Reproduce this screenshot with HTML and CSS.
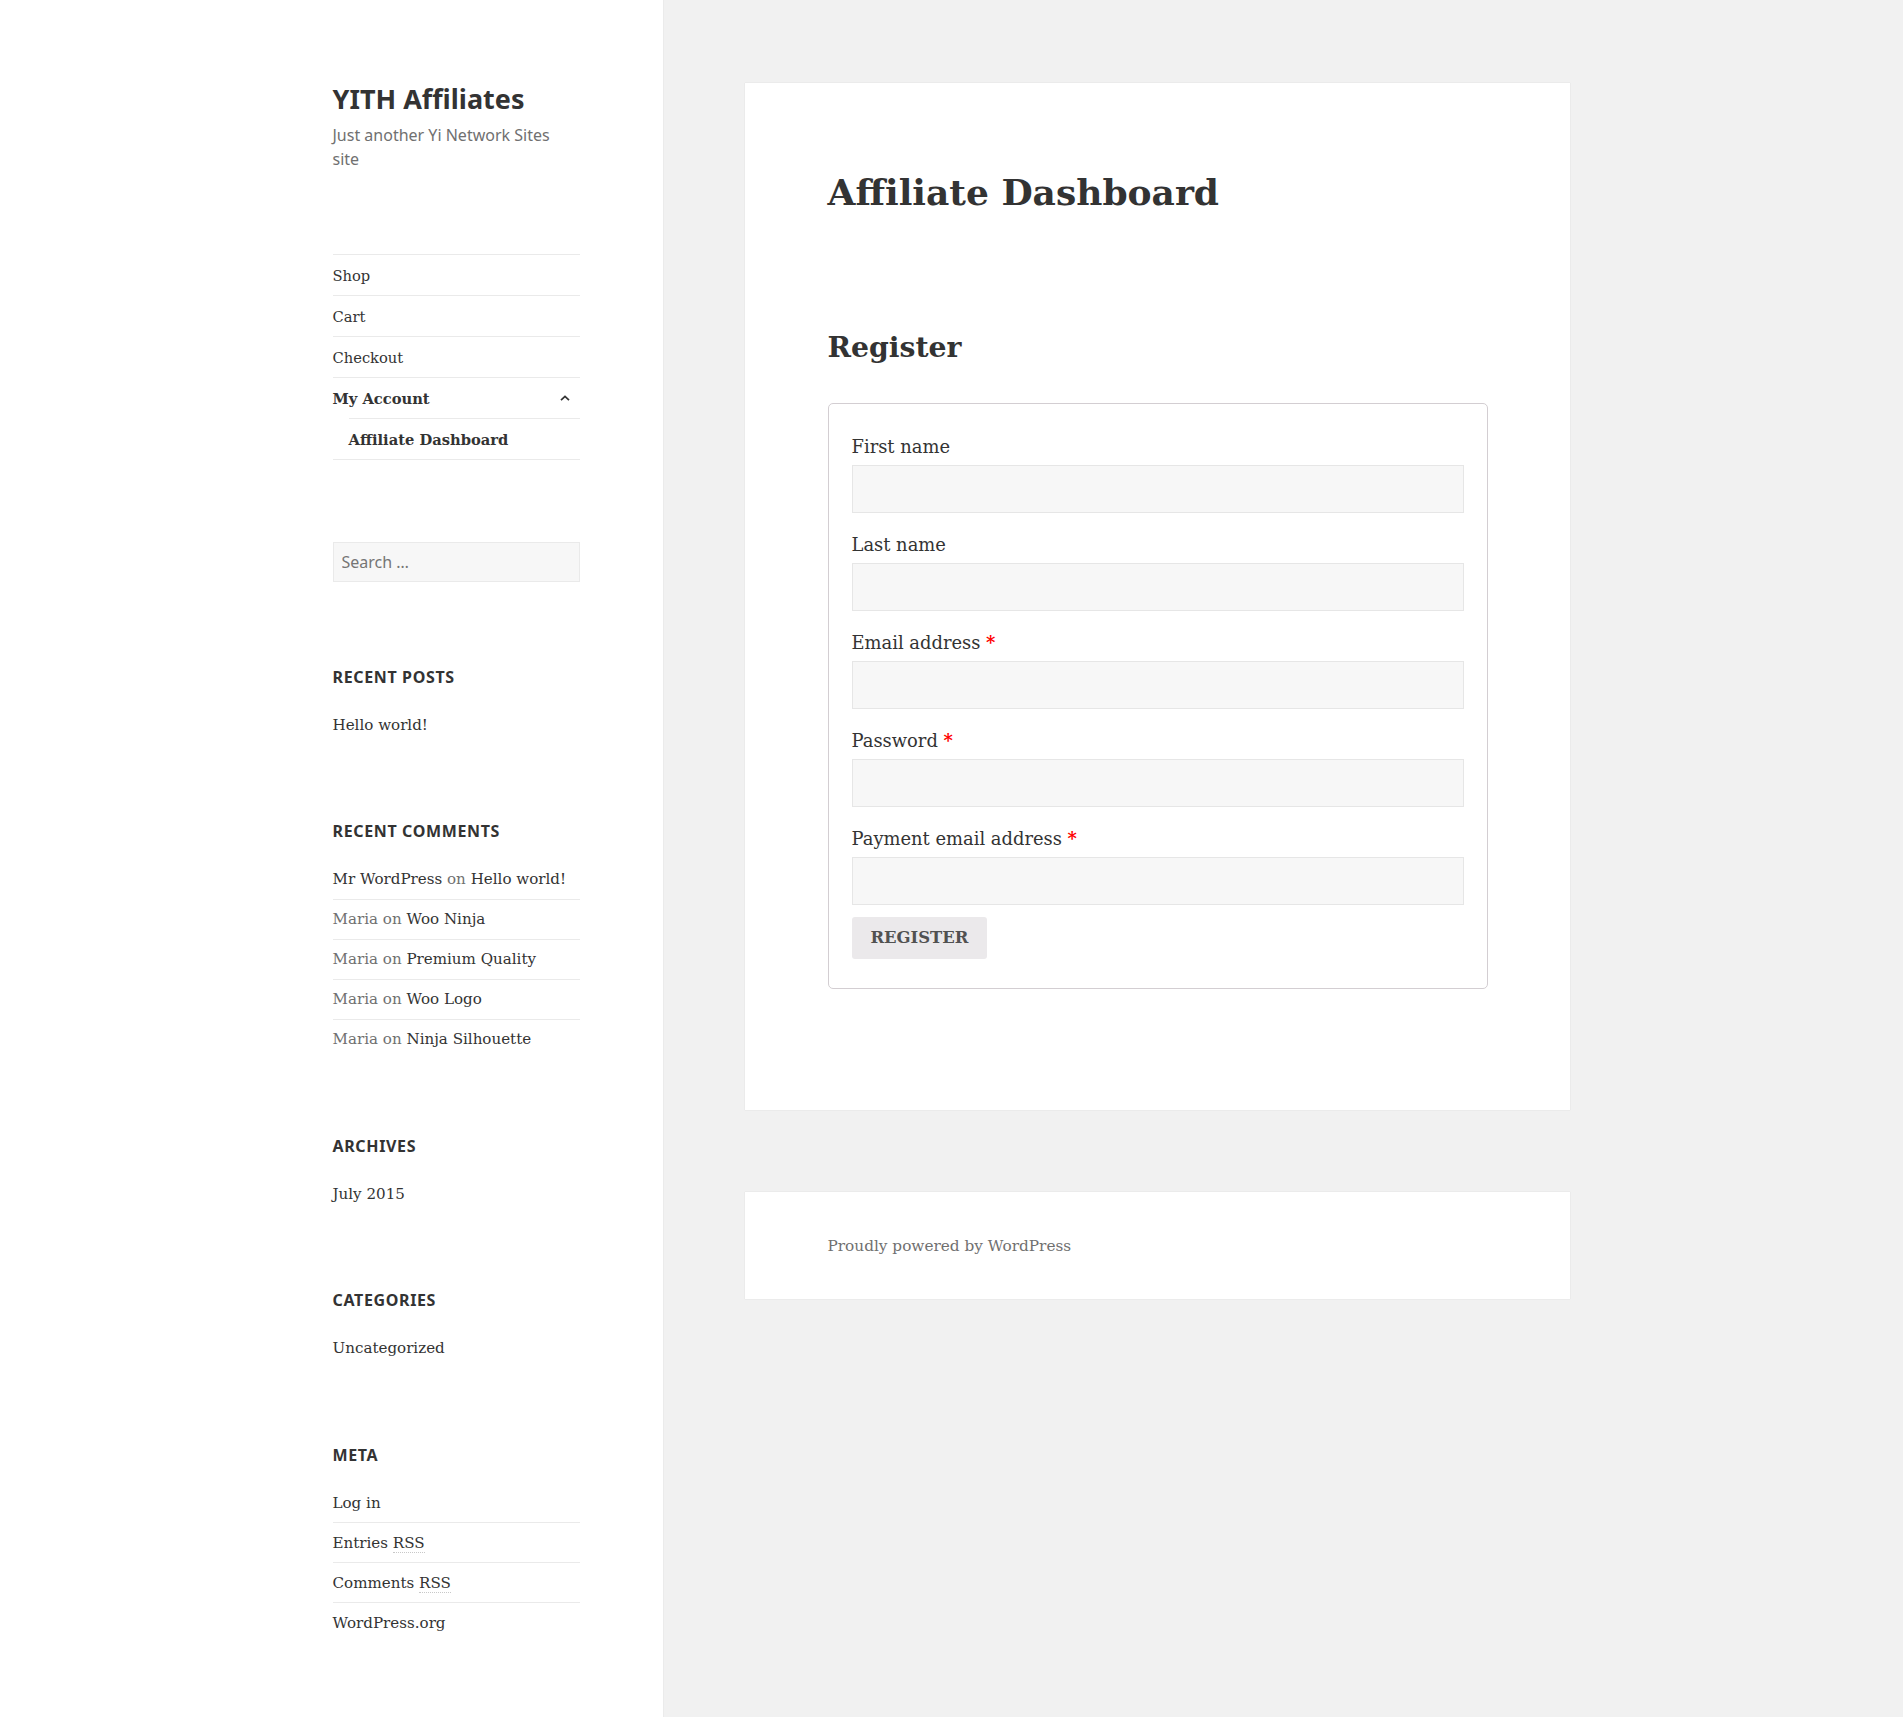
FILE: index.html
```html
<!DOCTYPE html>
<html lang="en">
<head>
<meta charset="utf-8">
<title>Affiliate Dashboard – YITH Affiliates</title>
<link rel="stylesheet" href="styles.css">
</head>
<body>
<div class="page">
  <aside class="sidebar">
    <header class="site-header">
      <p class="site-title"><a href="#">YITH Affiliates</a></p>
      <p class="site-description">Just another Yi Network Sites site</p>
    </header>
    <nav class="main-nav">
      <ul class="menu">
        <li><a href="#">Shop</a></li>
        <li><a href="#">Cart</a></li>
        <li><a href="#">Checkout</a></li>
        <li class="ancestor">
          <div class="menu-row">
            <a href="#">My Account</a>
            <span class="toggle"><svg width="10" height="6" viewBox="0 0 10 6"><polyline points="1,5.2 5,1.4 9,5.2" fill="none" stroke="#333" stroke-width="1.7"/></svg></span>
          </div>
          <ul class="sub-menu">
            <li class="current"><a href="#">Affiliate Dashboard</a></li>
          </ul>
        </li>
      </ul>
    </nav>
    <div class="widgets">
      <section class="widget widget-search">
        <input class="search-field" type="search" placeholder="Search …">
      </section>
      <section class="widget">
        <h2 class="widget-title">Recent Posts</h2>
        <ul class="widget-list">
          <li><a href="#">Hello world!</a></li>
        </ul>
      </section>
      <section class="widget">
        <h2 class="widget-title">Recent Comments</h2>
        <ul class="widget-list">
          <li><a href="#">Mr WordPress</a> <span class="muted">on</span> <a href="#">Hello world!</a></li>
          <li><span class="muted">Maria on</span> <a href="#">Woo Ninja</a></li>
          <li><span class="muted">Maria on</span> <a href="#">Premium Quality</a></li>
          <li><span class="muted">Maria on</span> <a href="#">Woo Logo</a></li>
          <li><span class="muted">Maria on</span> <a href="#">Ninja Silhouette</a></li>
        </ul>
      </section>
      <section class="widget">
        <h2 class="widget-title">Archives</h2>
        <ul class="widget-list">
          <li><a href="#">July 2015</a></li>
        </ul>
      </section>
      <section class="widget">
        <h2 class="widget-title">Categories</h2>
        <ul class="widget-list">
          <li><a href="#">Uncategorized</a></li>
        </ul>
      </section>
      <section class="widget">
        <h2 class="widget-title">Meta</h2>
        <ul class="widget-list">
          <li><a href="#">Log in</a></li>
          <li><a href="#">Entries <abbr class="abbr" title="Really Simple Syndication">RSS</abbr></a></li>
          <li><a href="#">Comments <abbr class="abbr" title="Really Simple Syndication">RSS</abbr></a></li>
          <li><a href="#">WordPress.org</a></li>
        </ul>
      </section>
    </div>
  </aside>

  <main class="content">
    <article class="card">
      <h1 class="entry-title">Affiliate Dashboard</h1>
      <h2 class="section-title">Register</h2>
      <form class="register-form">
        <p class="form-row"><label class="field-label">First name</label><input class="text-input" type="text"></p>
        <p class="form-row"><label class="field-label">Last name</label><input class="text-input" type="text"></p>
        <p class="form-row"><label class="field-label">Email address <span class="required">*</span></label><input class="text-input" type="email"></p>
        <p class="form-row"><label class="field-label">Password <span class="required">*</span></label><input class="text-input" type="password"></p>
        <p class="form-row"><label class="field-label">Payment email address <span class="required">*</span></label><input class="text-input" type="email"></p>
        <p class="form-row"><button class="button" type="button">Register</button></p>
      </form>
    </article>
    <footer class="site-footer">
      <a href="#">Proudly powered by WordPress</a>
    </footer>
  </main>
</div>
</body>
</html>
```

FILE: styles.css
```css
* { box-sizing: border-box; }

html, body {
  margin: 0;
  padding: 0;
}

body {
  background: #f1f1f1;
  color: #333333;
  font-family: "DejaVu Serif", serif;
}

a {
  color: #333333;
  text-decoration: none;
}

.page {
  display: flex;
  align-items: stretch;
  min-height: 100vh;
}

/* ---------- Sidebar ---------- */
.sidebar {
  flex: 0 0 662.5px;
  width: 662.5px;
  background: #ffffff;
  box-shadow: 0 0 1px rgba(0, 0, 0, 0.15);
  padding: 82.5px 82.5px 0 332.5px;
}

.site-header {
  margin: 0 0 82.5px;
}

.site-title {
  margin: 0;
  font-family: "Noto Sans", sans-serif;
  font-weight: 700;
  font-size: 27px;
  line-height: 32px;
}

.site-description {
  max-width: 228px;
  margin: 8.5px 0 0;
  font-family: "Noto Sans", sans-serif;
  font-size: 16px;
  line-height: 24px;
  color: #707070;
}

.main-nav {
  margin: 0 0 82.5px;
}

.menu,
.sub-menu,
.widget-list {
  list-style: none;
  margin: 0;
  padding: 0;
}

.menu {
  border-top: 1px solid #eaeaea;
  font-size: 14.7px;
}

.menu > li {
  border-bottom: 1px solid #eaeaea;
}

.menu a {
  display: block;
  padding: 9px 0 7px;
  line-height: 24px;
}

.menu-row {
  display: flex;
  align-items: center;
  justify-content: space-between;
}

.toggle {
  display: flex;
  margin-right: 10.5px;
}

.ancestor > .menu-row > a,
.current > a {
  font-weight: 700;
}

.sub-menu {
  margin-left: 16px;
  border-top: 1px solid #eaeaea;
}

/* ---------- Widgets ---------- */
.widget {
  margin: 0 0 82.5px;
  font-size: 15.1px;
  line-height: 24px;
}

.search-field {
  display: block;
  width: 100%;
  height: 40px;
  margin: 0;
  padding: 0 8px;
  background: #f7f7f7;
  border: 1px solid #eaeaea;
  border-radius: 0;
  font-family: "Noto Sans", sans-serif;
  font-size: 16px;
  color: #333;
  outline: none;
  -webkit-appearance: none;
}

.search-field::placeholder {
  color: #757575;
}

.widget-title {
  margin: 0 0 24px;
  font-family: "Noto Sans", sans-serif;
  font-weight: 700;
  font-size: 16px;
  line-height: 24px;
  letter-spacing: 0.04em;
  text-transform: uppercase;
}

.widget-list li {
  padding: 7.5px 0;
}

.widget-list li:first-child {
  padding-top: 0;
}

.widget-list li:last-child {
  padding-bottom: 0;
}

.widget-list li + li {
  border-top: 1px solid #eaeaea;
}

.muted {
  color: #707070;
}

.abbr {
  text-decoration: none;
  border-bottom: 1px dotted #c8c8c8;
}

/* ---------- Content ---------- */
.content {
  flex: 0 0 auto;
  padding: 82.5px 0 0 82.5px;
}

.card {
  width: 825.3px;
  background: #ffffff;
  box-shadow: 0 0 1px rgba(0, 0, 0, 0.15);
  padding: 85.2px 82.5px 82.5px;
}

.entry-title {
  margin: 0;
  font-size: 36px;
  font-weight: 700;
  line-height: 48px;
}

.section-title {
  margin: 111.2px 0 0;
  font-size: 28.3px;
  font-weight: 700;
  line-height: 40px;
}

.register-form {
  margin: 36.4px 0 38px;
  padding: 20px;
  border: 1px solid #d3ced2;
  border-radius: 5px;
}

.form-row {
  margin: 0 0 6px;
  padding: 3px;
}

.field-label {
  display: block;
  padding-top: 1px;
  height: 38px;
  line-height: 37px;
  font-size: 17.9px;
}

.required {
  color: #ff0000;
  font-weight: 700;
}

.text-input {
  display: block;
  width: 100%;
  height: 48px;
  margin: 0;
  padding: 0 10px;
  background: #f7f7f7;
  border: 1px solid #e6e6e6;
  border-radius: 0;
  font-family: "DejaVu Serif", serif;
  font-size: 17px;
  outline: none;
}

.button {
  display: block;
  height: 42px;
  margin: 0;
  padding: 0 19px;
  background: #ebe9eb;
  color: #515151;
  border: 0;
  border-radius: 3px;
  font-family: "DejaVu Serif", serif;
  font-size: 16.4px;
  font-weight: 700;
  line-height: 42px;
  text-transform: uppercase;
}

.site-footer {
  width: 825.3px;
  margin-top: 82px;
  background: #ffffff;
  box-shadow: 0 0 1px rgba(0, 0, 0, 0.15);
  padding: 42px 82.5px 41px;
  font-size: 15.3px;
  line-height: 24px;
}

.site-footer a {
  color: #707070;
}
```
